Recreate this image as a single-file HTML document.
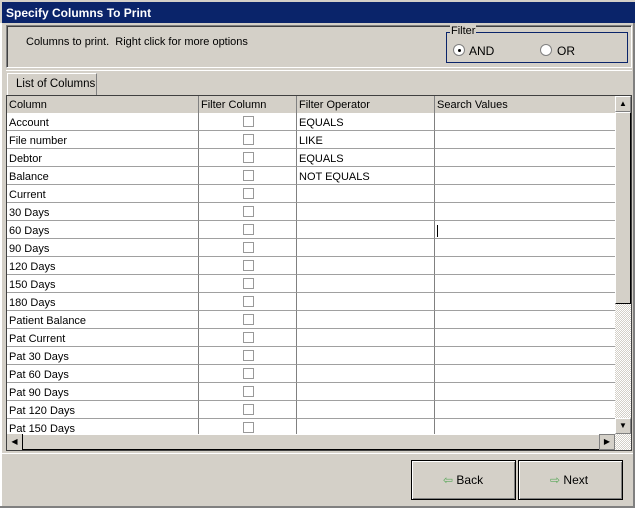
<!DOCTYPE html>
<html><head><style>
*{box-sizing:border-box;margin:0;padding:0}
body{width:635px;height:508px;background:#d4d0c8;font-family:"Liberation Sans",Arial,sans-serif;font-size:11px;color:#000;position:relative;overflow:hidden}
.a{position:absolute;white-space:nowrap}
.title{left:0;top:0;width:635px;height:23px;background:#0a246a;border-top:2px solid #d4d0c8;border-left:2px solid #d4d0c8;color:#fff;font-weight:bold;font-size:12px;padding:4px 0 0 4px}
.cell{position:absolute;height:18px;border-right:1px solid #808080;border-bottom:1px solid #a0a0a0;padding:4px 0 0 2px;white-space:nowrap;overflow:hidden;background:#fff}
.hd{background:#d4d0c8;border-bottom:1px solid #404040;padding-top:3px}
.cb{position:absolute;left:44px;top:3px;width:11px;height:11px;border:1px solid #999;background:#fff}
.btn{position:absolute;border:1px solid #000;background:#d4d0c8;box-shadow:inset 1px 1px #fff,inset -1px -1px #808080;font-size:12px}
</style></head><body>
<div class="a title">Specify Columns To Print</div>
<div class="a" style="left:0;top:23px;width:2px;height:485px;background:#fff"></div>
<div class="a" style="left:633px;top:23px;width:2px;height:485px;background:#808080"></div>
<div class="a" style="left:6px;top:25px;width:626px;height:43px;border:1px solid #808080;border-right-color:#fff;border-bottom-color:#fff;box-shadow:inset 1px 1px #404040"></div>
<div class="a" style="left:26px;top:36px;">Columns to print.&nbsp; Right click for more options</div>
<div class="a" style="left:446px;top:32px;width:182px;height:31px;border:1px solid #0a246a"></div>
<div class="a" style="left:450px;top:25px;background:#d4d0c8;padding:0 1px">Filter</div>
<div class="a" style="left:453px;top:44px;width:12px;height:12px;border-radius:50%;background:#fff;border:1px solid #808080"><div class="a" style="left:3.5px;top:3.5px;width:3px;height:3px;background:#000;border-radius:50%"></div></div>
<div class="a" style="left:469px;top:44px;font-size:12px">AND</div>
<div class="a" style="left:540px;top:44px;width:12px;height:12px;border-radius:50%;background:#fff;border:1px solid #808080"></div>
<div class="a" style="left:557px;top:44px;font-size:12px">OR</div>
<div class="a" style="left:6px;top:70px;width:626px;height:1px;background:#fff"></div>
<div class="a" style="left:7px;top:73px;width:90px;height:22px;border:1px solid #808080;border-left-color:#fff;border-top-color:#fff;border-bottom:none;padding:4px 0 0 8px;font-size:11.5px">List of Columns</div>
<div class="a" style="left:6px;top:95px;width:626px;height:356px;border:1px solid #404040;background:#fff;overflow:hidden" id="g"></div>
<div class="a" style="left:615px;top:96px;width:16px;height:16px;background:#d4d0c8;border:1px solid #808080;border-top-color:#fff;border-left-color:#fff;font-size:8px;text-align:center;line-height:14px">▲</div>
<div class="a" style="left:615px;top:112px;width:16px;height:192px;background:#d4d0c8;border:1px solid #000;border-top-color:#fff;border-left-color:#fff"></div>
<div class="a" style="left:615px;top:304px;width:16px;height:114px;background:repeating-conic-gradient(#fff 0 25%,#d4d0c8 0 50%) 0 0/2px 2px"></div>
<div class="a" style="left:615px;top:418px;width:16px;height:16px;background:#d4d0c8;border:1px solid #808080;border-top-color:#fff;border-left-color:#fff;font-size:8px;text-align:center;line-height:14px">▼</div>
<div class="a" style="left:7px;top:434px;width:608px;height:16px;background:#d4d0c8;border:1px solid #000;border-top-color:#fff;border-left-color:#fff"></div>
<div class="a" style="left:7px;top:434px;width:16px;height:16px;background:#d4d0c8;border-right:1px solid #000;font-size:8px;text-align:center;line-height:16px">◀</div>
<div class="a" style="left:599px;top:434px;width:16px;height:16px;background:#d4d0c8;border:1px solid #808080;font-size:8px;text-align:center;line-height:14px">▶</div>
<div class="a" style="left:615px;top:434px;width:16px;height:16px;background:repeating-conic-gradient(#fff 0 25%,#d4d0c8 0 50%) 0 0/2px 2px"></div>
<div class="a" style="left:2px;top:453px;width:631px;height:1px;background:#fff"></div>
<div class="btn" style="left:411px;top:460px;width:105px;height:40px;padding:12px 0 0 31px"><span style="color:#5aa85a">⇦</span> Back</div>
<div class="btn" style="left:518px;top:460px;width:105px;height:40px;padding:12px 0 0 31px"><span style="color:#5aa85a">⇨</span> Next</div>
<div class="a" style="left:0;top:506px;width:635px;height:2px;background:#808080"></div>
<script>
var g=document.getElementById('g');
var cols=[[0,192],[192,98],[290,138],[428,181]];
var h=['Column','Filter Column','Filter Operator','Search Values'];
var rows=['Account','File number','Debtor','Balance','Current','30 Days','60 Days','90 Days','120 Days','150 Days','180 Days','Patient Balance','Pat Current','Pat 30 Days','Pat 60 Days','Pat 90 Days','Pat 120 Days','Pat 150 Days'];
var ops=['EQUALS','LIKE','EQUALS','NOT EQUALS'];
var s='';
h.forEach(function(t,i){s+='<div class="cell hd" style="left:'+cols[i][0]+'px;top:0;width:'+cols[i][1]+'px">'+t+'</div>';});
rows.forEach(function(r,j){var y=17+j*18;
s+='<div class="cell" style="left:0;top:'+y+'px;width:192px">'+r+'</div>';
s+='<div class="cell" style="left:192px;top:'+y+'px;width:98px"><div class="cb"></div></div>';
s+='<div class="cell" style="left:290px;top:'+y+'px;width:138px">'+(ops[j]||'')+'</div>';
s+='<div class="cell" style="left:428px;top:'+y+'px;width:181px">'+(j==6?'<span style="border-left:1px solid #000">&nbsp;</span>':'')+'</div>';});
g.innerHTML=s;
</script>
</body></html>
